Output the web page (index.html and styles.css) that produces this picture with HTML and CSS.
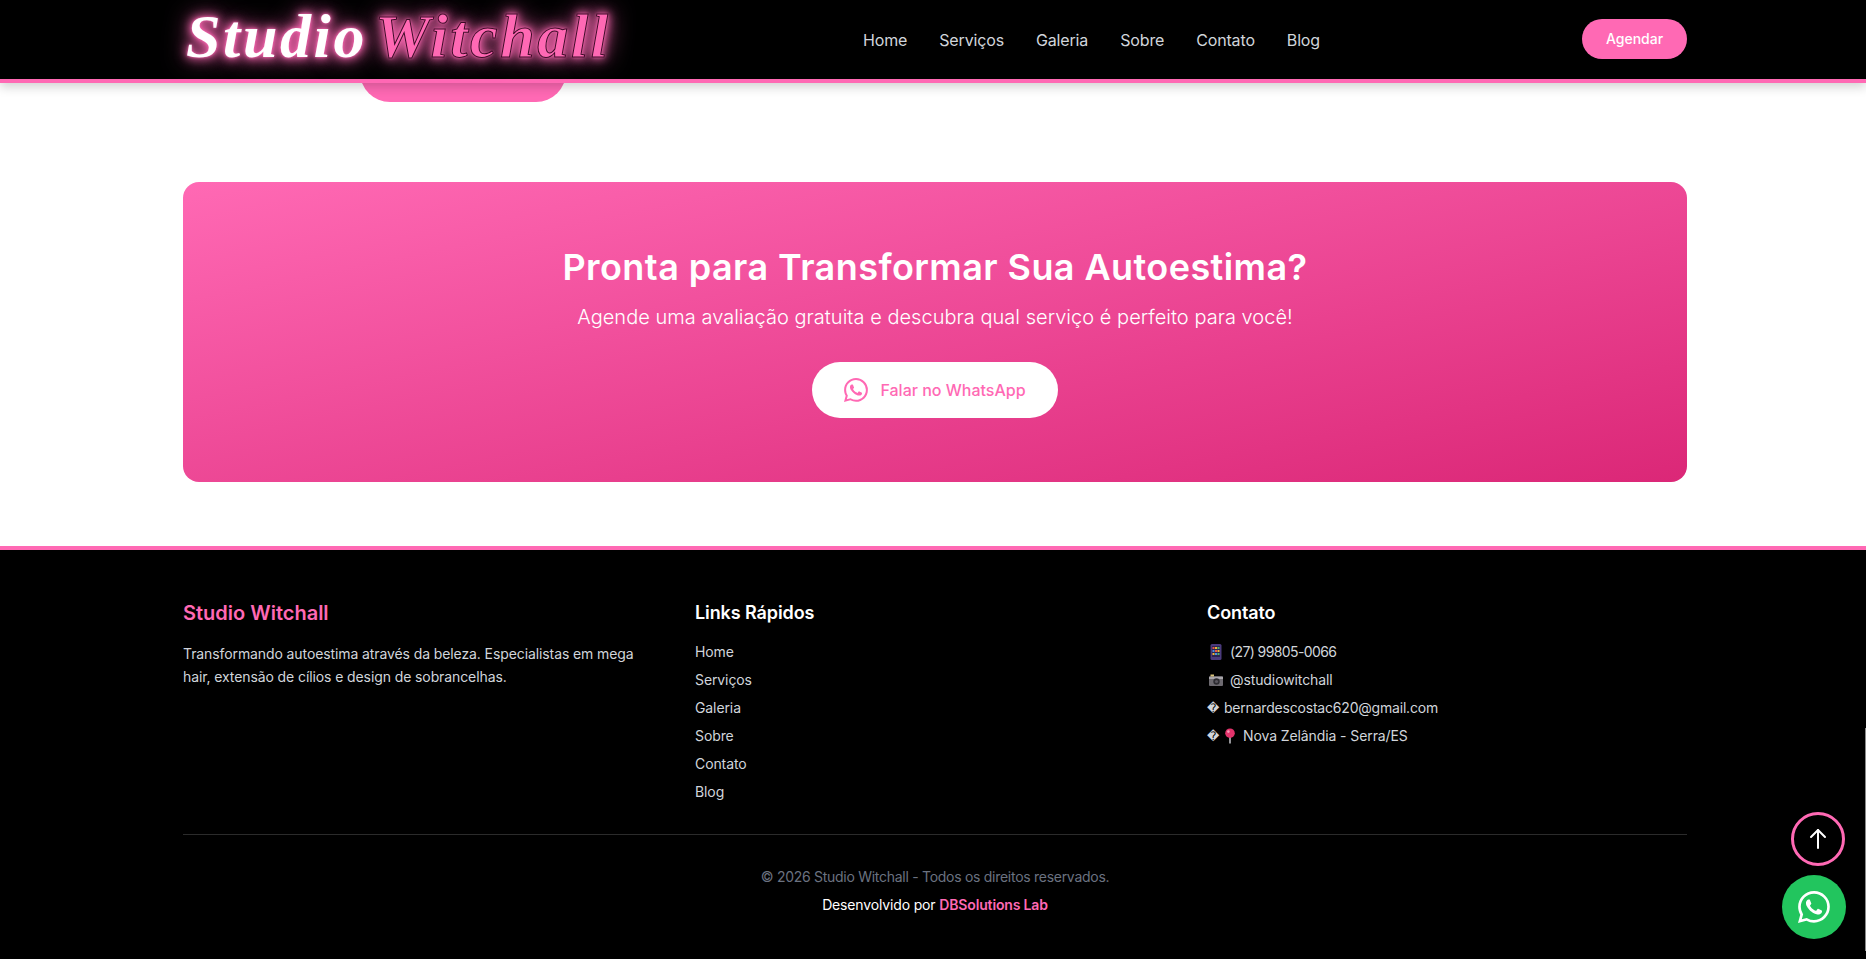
FILE: index.html
```html
<!DOCTYPE html>
<html lang="pt-BR">
<head>
  <meta charset="UTF-8">
  <meta name="viewport" content="width=device-width, initial-scale=1.0">
  <title>Studio Witchall</title>
  <link rel="stylesheet" href="styles.css">
</head>
<body>
  <svg class="icon-defs" aria-hidden="true">
    <symbol id="whatsapp" viewBox="0 0 16 16">
      <path fill="currentColor" d="M13.601 2.326A7.854 7.854 0 0 0 7.994 0C3.627 0 .068 3.558.064 7.926c0 1.399.366 2.76 1.057 3.965L0 16l4.204-1.102a7.933 7.933 0 0 0 3.79.965h.004c4.368 0 7.926-3.558 7.93-7.93A7.898 7.898 0 0 0 13.6 2.326zM7.994 14.521a6.573 6.573 0 0 1-3.356-.92l-.24-.144-2.494.654.666-2.433-.156-.251a6.56 6.56 0 0 1-1.007-3.505c0-3.626 2.957-6.584 6.591-6.584a6.56 6.56 0 0 1 4.66 1.931 6.557 6.557 0 0 1 1.928 4.66c-.004 3.639-2.961 6.592-6.592 6.592zm3.615-4.934c-.197-.099-1.17-.578-1.353-.646-.182-.065-.315-.099-.445.099-.133.197-.513.646-.627.775-.114.133-.232.148-.43.05-.197-.1-.836-.308-1.592-.985-.59-.525-.985-1.175-1.103-1.372-.114-.198-.011-.304.088-.403.087-.088.197-.232.296-.346.1-.114.133-.198.198-.33.065-.134.034-.248-.015-.347-.05-.099-.445-1.076-.612-1.47-.16-.389-.323-.335-.445-.34-.114-.007-.247-.007-.38-.007a.729.729 0 0 0-.529.247c-.182.198-.691.677-.691 1.654 0 .977.71 1.916.81 2.049.098.133 1.394 2.132 3.383 2.992.47.205.84.326 1.129.418.475.152.904.129 1.246.08.38-.058 1.171-.48 1.338-.943.164-.464.164-.86.114-.943-.049-.084-.182-.133-.38-.232z"/>
    </symbol>
  </svg>

  <!-- header -->
  <header class="site-header">
    <div class="wrap header-row">
      <a href="#" class="logo"><span class="logo-a">Studio</span> <span class="logo-b">Witchall</span></a>
      <nav class="main-nav">
        <a href="#">Home</a>
        <a href="#">Serviços</a>
        <a href="#">Galeria</a>
        <a href="#">Sobre</a>
        <a href="#">Contato</a>
        <a href="#">Blog</a>
      </nav>
      <a href="#" class="btn-agendar">Agendar</a>
    </div>
  </header>

  <!-- fim do hero, cortado pelo header -->
  <div class="wrap hero-end">
    <div class="hero-pill"></div>
  </div>

  <!-- chamada -->
  <section class="wrap cta-section">
    <div class="cta-card">
      <h2>Pronta para Transformar Sua Autoestima?</h2>
      <p>Agende uma avaliação gratuita e descubra qual serviço é perfeito para você!</p>
      <a href="#" class="cta-btn">
        <svg class="cta-btn-icon"><use href="#whatsapp"></use></svg>
        Falar no WhatsApp
      </a>
    </div>
  </section>

  <!-- rodape -->
  <footer class="site-footer">
    <div class="wrap">
      <div class="footer-grid">
        <div>
          <h3 class="footer-brand">Studio Witchall</h3>
          <p class="footer-about">Transformando autoestima através da beleza. Especialistas em mega hair, extensão de cílios e design de sobrancelhas.</p>
        </div>
        <div>
          <h4 class="footer-title">Links Rápidos</h4>
          <ul class="footer-list">
            <li><a href="#">Home</a></li>
            <li><a href="#">Serviços</a></li>
            <li><a href="#">Galeria</a></li>
            <li><a href="#">Sobre</a></li>
            <li><a href="#">Contato</a></li>
            <li><a href="#">Blog</a></li>
          </ul>
        </div>
        <div>
          <h4 class="footer-title">Contato</h4>
          <ul class="footer-list">
            <li>
              <svg class="emoji" viewBox="0 0 16 16"><rect x="2.5" y="0" width="11" height="16" rx="1.5" fill="#4a3a7c"/><rect x="4" y="2" width="8" height="11" fill="#2b2450"/><rect x="4.5" y="3" width="2" height="2" fill="#e5534b"/><rect x="7" y="3" width="2" height="2" fill="#f2b632"/><rect x="9.5" y="3" width="2" height="2" fill="#4fb06d"/><rect x="4.5" y="6" width="2" height="2" fill="#4c8fe0"/><rect x="7" y="6" width="2" height="2" fill="#e5534b"/><rect x="9.5" y="6" width="2" height="2" fill="#f2b632"/><rect x="4.5" y="9" width="2" height="2" fill="#f2b632"/><rect x="7" y="9" width="2" height="2" fill="#4c8fe0"/><rect x="9.5" y="9" width="2" height="2" fill="#4fb06d"/></svg>
              <span class="tel">(27) 99805-0066</span>
            </li>
            <li>
              <svg class="emoji" viewBox="0 0 16 16"><rect x="1" y="4" width="14" height="10" rx="1" fill="#6d6a70"/><rect x="2.5" y="2.5" width="3.5" height="2" fill="#d8c27a"/><rect x="1" y="5" width="14" height="2" fill="#a9a6ab"/><circle cx="8.5" cy="9.5" r="3.2" fill="#2c2b30"/><circle cx="8.5" cy="9.5" r="1.6" fill="#59565e"/></svg>
              @studiowitchall
            </li>
            <li><span class="bad-char">�</span> <span class="email">bernardescostac620@gmail.com</span></li>
            <li>
              <span class="bad-char">�</span>
              <svg class="emoji-pin" viewBox="0 0 14 16"><line x1="6" y1="9" x2="6" y2="15.5" stroke="#c4c4ca" stroke-width="1.5"/><circle cx="6" cy="5.2" r="4.8" fill="#e2336b"/><circle cx="4.4" cy="3.6" r="1.3" fill="#f59ab8"/></svg>
              Nova Zelândia - Serra/ES
            </li>
          </ul>
        </div>
      </div>
      <div class="footer-bottom">
        <p class="copyright">© 2026 Studio Witchall - Todos os direitos reservados.</p>
        <p class="dev-by">Desenvolvido por <a href="#">DBSolutions Lab</a></p>
      </div>
    </div>
  </footer>

  <!-- botoes flutuantes -->
  <a href="#" class="float-top" aria-label="Voltar ao topo">
    <svg viewBox="0 0 24 24" width="24" height="24" fill="none" stroke="#fff" stroke-width="2" stroke-linecap="round" stroke-linejoin="round"><path d="M12 21V3"/><path d="M5 10l7-7 7 7"/></svg>
  </a>
  <a href="#" class="float-whatsapp" aria-label="WhatsApp">
    <svg class="float-whatsapp-icon"><use href="#whatsapp"></use></svg>
  </a>
  <div class="scroll-edge"></div>
</body>
</html>
```

FILE: styles.css
```css
/* base */
* {
  box-sizing: border-box;
}

body {
  margin: 0;
  background-color: #fff;
  font-family: "Inter", "Noto Sans", Arial, sans-serif;
  color: #fff;
  overflow: hidden;
}

a {
  color: inherit;
  text-decoration: none;
}

h2, h3, h4, p, ul {
  margin: 0;
  padding: 0;
}

.icon-defs {
  display: none;
}

.wrap {
  width: 1504px;
  margin-left: 183px;
}

/* header */
.site-header {
  position: relative;
  z-index: 10;
  height: 83px;
  background-color: #000;
  border-bottom: 4px solid #ff69b4;
  box-shadow: 0 4px 10px rgba(0, 0, 0, 0.18);
}

.header-row {
  height: 79px;
  display: flex;
  align-items: center;
}

.logo {
  width: 680px;
  padding: 0 0 7px 3px;
  font-family: "Liberation Serif", serif;
  font-style: italic;
  font-weight: bold;
  font-size: 62px;
  line-height: 72px;
  letter-spacing: 2.6px;
  word-spacing: -9px;
  white-space: nowrap;
  text-shadow: 0 0 3px #ff69b4, 0 0 8px #ff69b4, 0 0 14px #ff69b4, 0 0 26px #ff69b4;
}

.logo-a {
  color: #fff;
}

.logo-b {
  color: #ff69b4;
  -webkit-text-stroke: 1px #3a0a25;
}

.main-nav {
  display: flex;
  gap: 32px;
  font-size: 16px;
  letter-spacing: -0.15px;
  color: #d1d5db;
}

.btn-agendar {
  margin-left: auto;
  margin-bottom: 1px;
  width: 105px;
  height: 40px;
  border-radius: 20px;
  background-color: #ff69b4;
  font-size: 14px;
  font-weight: 500;
  line-height: 40px;
  text-align: center;
}

/* hero */
.hero-end {
  display: flex;
  align-items: flex-end;
  height: 19px;
  padding-left: 177px;
}

.hero-pill {
  flex-shrink: 0;
  width: 206px;
  height: 60px;
  background-color: #ff69b4;
  border-radius: 30px;
}

/* chamada */
.cta-section {
  padding: 80px 0 64px;
}

.cta-card {
  height: 300px;
  padding-top: 65px;
  border-radius: 16px;
  background: linear-gradient(to bottom right, #ff69b4 0%, #db2777 100%);
  text-align: center;
}

.cta-card h2 {
  font-size: 36px;
  line-height: 40px;
  font-weight: 600;
  letter-spacing: 0.43px;
}

.cta-card p {
  margin-top: 16px;
  font-size: 20px;
  line-height: 28px;
  font-weight: 300;
  letter-spacing: 0.03px;
}

.cta-btn {
  display: inline-flex;
  align-items: center;
  gap: 12px;
  height: 56px;
  margin-top: 31px;
  padding: 0 32px;
  border-radius: 28px;
  background-color: #fff;
  color: #ff69b4;
  font-size: 16px;
  font-weight: 500;
}

.cta-btn-icon {
  width: 24px;
  height: 24px;
}

/* rodape */
.site-footer {
  height: 413px;
  background-color: #000;
  border-top: 4px solid #ff69b4;
  padding-top: 49px;
}

.footer-grid {
  display: grid;
  grid-template-columns: repeat(3, 1fr);
  gap: 32px;
  height: 236px;
  border-bottom: 1px solid #2b2b2b;
}

.footer-brand {
  font-size: 20px;
  line-height: 28px;
  font-weight: 600;
  color: #ff69b4;
}

.footer-about {
  margin-top: 15px;
  font-size: 14px;
  line-height: 23px;
  letter-spacing: -0.1px;
  color: #d1d5db;
}

.footer-title {
  font-size: 18px;
  line-height: 28px;
  font-weight: 600;
  letter-spacing: -0.1px;
}

.footer-list {
  list-style: none;
  margin-top: 15px;
  font-size: 14px;
  line-height: 20px;
  letter-spacing: -0.1px;
  color: #d1d5db;
}

.footer-list li {
  display: flex;
  align-items: center;
  gap: 5px;
  height: 20px;
  margin-bottom: 8px;
}

.tel {
  letter-spacing: -0.6px;
}

.email {
  letter-spacing: -0.2px;
}

.emoji {
  width: 18px;
  height: 16px;
  flex-shrink: 0;
}

.emoji-pin {
  width: 14px;
  height: 16px;
  flex-shrink: 0;
}

.bad-char {
  width: 12px;
  font-family: "DejaVu Sans", sans-serif;
  font-size: 12px;
}

.footer-bottom {
  padding-top: 32px;
  text-align: center;
  font-size: 14px;
  line-height: 20px;
}

.copyright {
  letter-spacing: -0.28px;
  color: #6b7280;
}

.dev-by {
  margin-top: 8px;
  letter-spacing: -0.15px;
}

.dev-by a {
  color: #ff69b4;
  font-weight: 600;
}

/* botoes flutuantes */
.float-top {
  position: fixed;
  left: 1791px;
  top: 812px;
  width: 54px;
  height: 54px;
  display: flex;
  align-items: center;
  justify-content: center;
  border: 3px solid #ff69b4;
  border-radius: 50%;
  background-color: #000;
}

.float-whatsapp {
  position: fixed;
  left: 1782px;
  top: 875px;
  width: 64px;
  height: 64px;
  display: flex;
  align-items: center;
  justify-content: center;
  border-radius: 50%;
  background-color: #22c55e;
  color: #fff;
}

.float-whatsapp-icon {
  width: 32px;
  height: 32px;
}

.scroll-edge {
  position: fixed;
  left: 1865px;
  top: 728px;
  width: 1px;
  height: 223px;
  background-color: #8a8a8a;
}
```
